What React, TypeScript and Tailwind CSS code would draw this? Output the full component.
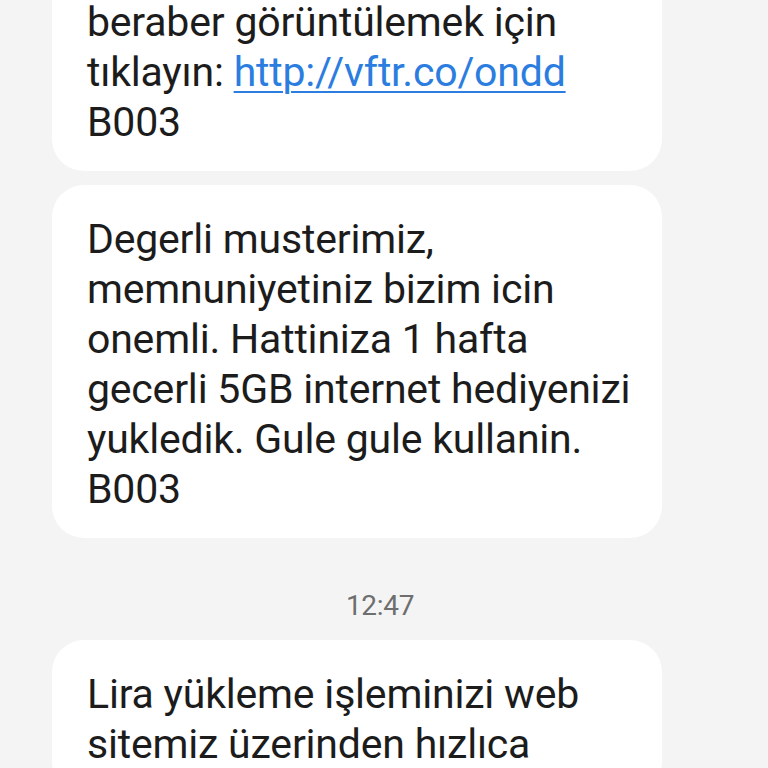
const font = { fontFamily: 'Roboto, "Noto Sans", sans-serif' };

function Bubble({ lines, className = '' }: { lines: React.ReactNode[]; className?: string }) {
  return (
    <div className={`w-[610px] rounded-[32px] bg-white pl-[35px] pr-[20px] pt-[29px] pb-[24px] ${className}`}>
      {lines.map((line, i) => (
        <div key={i} className="whitespace-nowrap text-[41px] leading-[50px] tracking-[-0.2px] text-[#1c1c1c]">
          {line}
        </div>
      ))}
    </div>
  );
}

export default function App() {
  return (
    <div className="h-[768px] w-[768px] overflow-hidden bg-[#f4f4f4]" style={font}>
      <div className="flex flex-col pl-[52px]">
        <Bubble
          className="mt-[-32px]"
          lines={[
            'beraber görüntülemek için',
            <>
              tıklayın:{' '}
              <span className="text-[#2b7de0] underline decoration-2 underline-offset-[5px]">http://vftr.co/ondd</span>
            </>,
            'B003',
          ]}
        />
        <Bubble
          className="mt-[14px]"
          lines={[
            'Degerli musterimiz,',
            'memnuniyetiniz bizim icin',
            'onemli. Hattiniza 1 hafta',
            'gecerli 5GB internet hediyenizi',
            'yukledik. Gule gule kullanin.',
            'B003',
          ]}
        />
      </div>
      <div className="flex justify-center pt-[51px] pb-[17px] pr-[8px]">
        <span className="text-[28px] leading-[34px] text-[#6e6e6e] tracking-[-0.3px]">12:47</span>
      </div>
      <div className="flex flex-col pl-[52px]">
        <Bubble lines={['Lira yükleme işleminizi web', 'sitemiz üzerinden hızlıca']} />
      </div>
    </div>
  );
}
